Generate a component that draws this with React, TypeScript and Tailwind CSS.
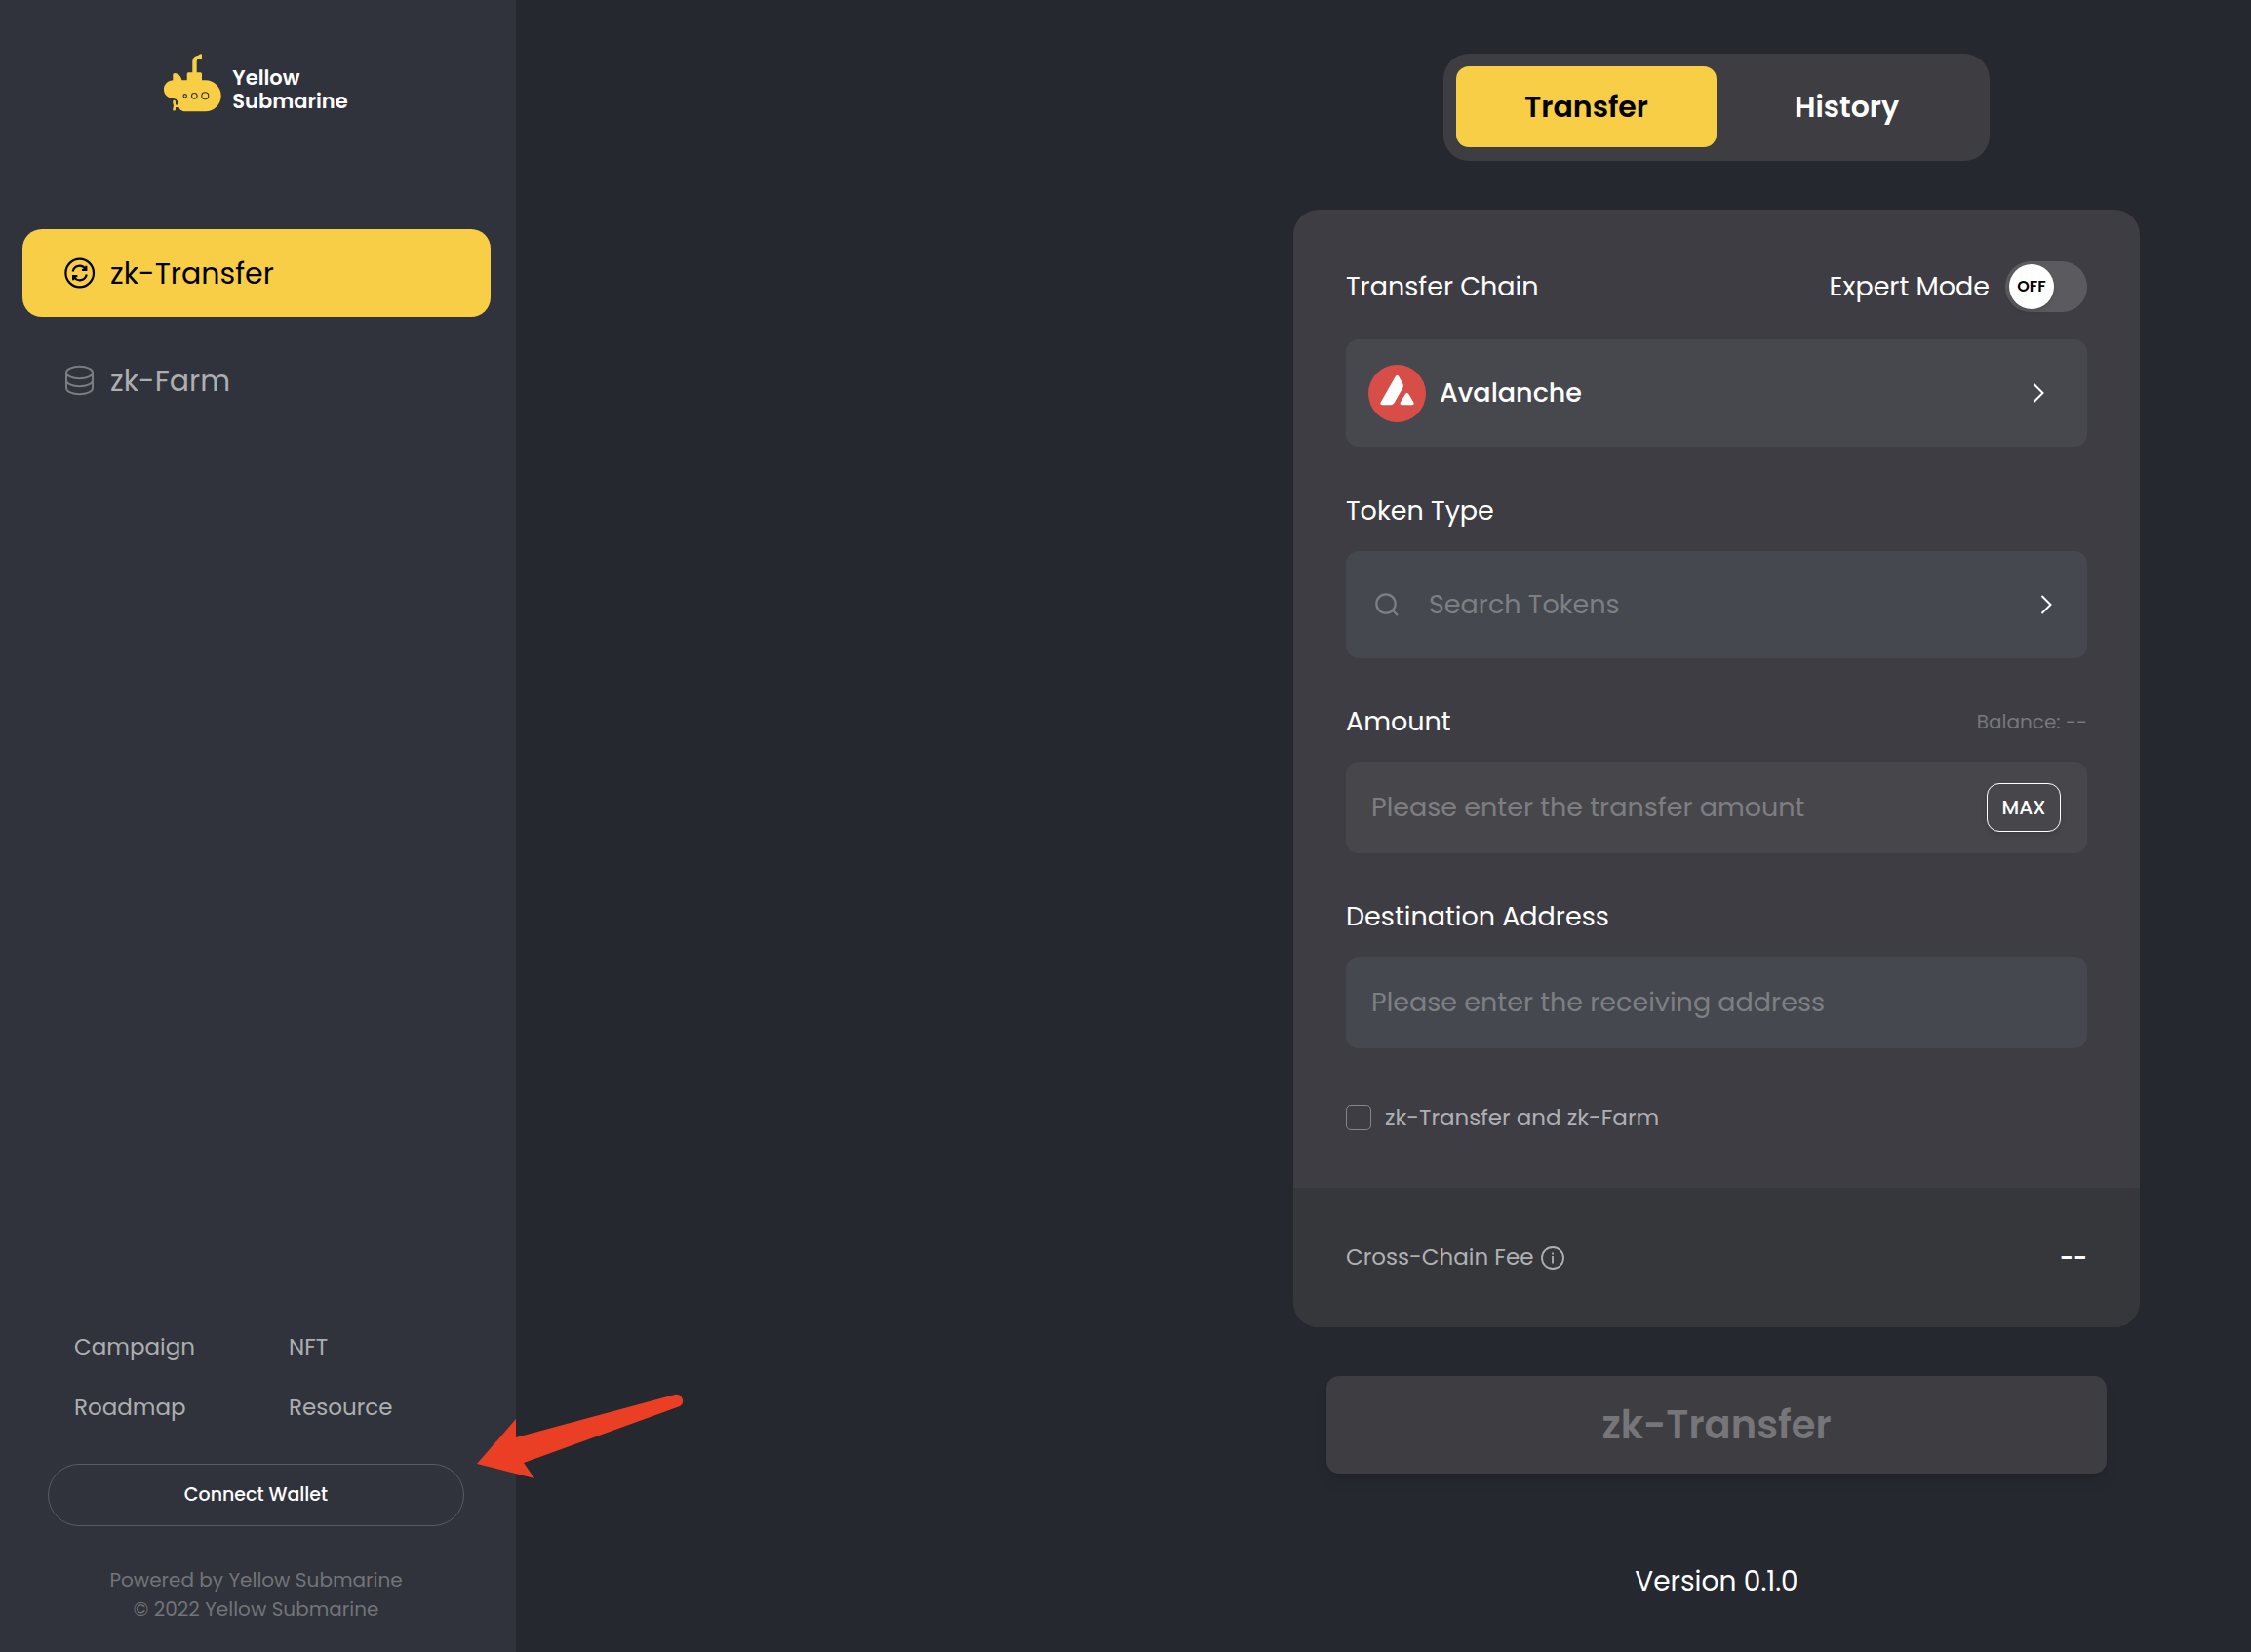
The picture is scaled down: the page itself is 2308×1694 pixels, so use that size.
import { useState } from "react";
import type { ReactNode } from "react";

function SubmarineLogo() {
  return (
    <svg viewBox="0 0 60 61" className="h-[61px] w-[60px]" aria-hidden="true">
      <g fill="#f8ce46">
        <path d="M9.300 27.300V21.500q0-1.500 1.500-1.500c4 0 6.500 3 7.700 7.300H23.700v-6.500q0-1.500 1.500-1.500H29.300V9c0-4.500 2.500-7 6-7.300L37 .6q2-1 2 .6v4q0 1.600-2 .6l-1-.5c-1.600.1-2.300 1.200-2.300 3.200v10.800H37.500q1.500 0 1.500 1.500v6.500h3.700a16 16 0 0 1 0 32H22.500c-5 0-7.500-2.700-7.500-6.500 0-4-2-6.800-5.700-6.800a9.350 9.350 0 0 1 0-18.700z" />
        <path d="M10.500 47.800c1.500 0 1.500 1.400 1.500 4.700h4v2.400h-4c0 2.600 0 3.700-1.500 3.700s-1.500-1.200-1-3.200c.6-1.500.6-2.500 0-4s-.5-3.600 1-3.600z" />
      </g>
      <g fill="none" stroke="#30333b" strokeWidth="1.100">
        <circle cx="21.700" cy="43.300" r="1.700" />
        <circle cx="31.300" cy="43.300" r="2.800" />
        <circle cx="42.300" cy="43.300" r="3.500" />
      </g>
    </svg>
  );
}

function TransferIcon() {
  return (
    <svg viewBox="0 0 32 32" className="size-8" fill="none" stroke="currentColor" aria-hidden="true">
      <circle cx="15.700" cy="16" r="14.300" strokeWidth="2.200" />
      <g strokeWidth="2.200">
        <path d="M8.700 14.500A7 7 0 0 1 21.500 12M22.700 17.500A7 7 0 0 1 9.900 20" />
        <path d="M22.300 8.800V12.800H18M9.100 23.200V19.200H13.400" />
      </g>
    </svg>
  );
}

function FarmIcon() {
  return (
    <svg viewBox="0 0 32 32" className="size-8" fill="none" stroke="currentColor" strokeWidth="2" aria-hidden="true">
      <ellipse cx="15.500" cy="8" rx="13.500" ry="6.200" />
      <path d="M2 8v16c0 3.500 6 6.300 13.500 6.300s13.500-2.800 13.500-6.300V8" />
      <path d="M2 16c0 3.500 6 6.300 13.500 6.300s13.500-2.800 13.500-6.300" />
    </svg>
  );
}

function AvalancheIcon() {
  return (
    <svg viewBox="0 0 59 59" className="size-[59px]" aria-hidden="true">
      <circle cx="29.500" cy="29.500" r="29.500" fill="#d74e49" />
      <path fill="#fff" d="M27.800 12c.9-1.500 2.500-1.500 3.400 0l4 7.200c.9 1.600.9 3.200 0 4.800l-8.500 14.800c-1 1.700-2 2.400-3.800 2.400h-8.500c-1.800 0-2.600-1.200-1.700-2.800zM38 30c.9-1.500 2.400-1.500 3.300 0l5 8.400c.9 1.600 0 2.800-1.700 2.800h-10c-1.800 0-2.600-1.200-1.700-2.800z" />
    </svg>
  );
}

function Chevron() {
  return (
    <svg viewBox="0 0 12 20" className="h-5 w-3" fill="none" stroke="#fff" strokeWidth="2" aria-hidden="true">
      <path d="M1.500 1l9 9-9 9" />
    </svg>
  );
}

function SearchIcon() {
  return (
    <svg viewBox="0 0 24 24" className="size-6" fill="none" stroke="currentColor" strokeWidth="2.200" aria-hidden="true">
      <circle cx="11" cy="11" r="9.700" />
      <path d="M17.500 17.500l5.500 5.500" />
    </svg>
  );
}

function InfoIcon() {
  return (
    <svg viewBox="0 0 24 24" className="size-6" fill="none" stroke="currentColor" strokeWidth="1.800" aria-hidden="true">
      <circle cx="12" cy="12" r="11" />
      <path d="M12 10v7.500M12 6.500v2" />
    </svg>
  );
}

function PointerArrow() {
  return (
    <svg
      viewBox="0 0 212 88"
      className="pointer-events-none absolute bottom-[178px] left-[489px] z-10 h-[88px] w-[212px]"
      fill="#ea3f25"
      aria-hidden="true"
    >
      <path d="M0 73L40 27V46L203 2c5-1 9 4 8 8q0 2-3 4L48 72l11 16z" />
    </svg>
  );
}

function FieldLabel({ htmlFor, children }: { htmlFor: string; children: ReactNode }) {
  return (
    <label htmlFor={htmlFor} className="text-[27px] leading-[42px] text-white">
      {children}
    </label>
  );
}

const links = ["Campaign", "NFT", "Roadmap", "Resource"];

function Sidebar() {
  return (
    <aside className="flex w-[529px] shrink-0 flex-col bg-[#30333b]">
      <a href="#home" className="mt-[55px] mr-1 flex items-start gap-[10px] self-center text-white">
        <SubmarineLogo />
        <span className="flex flex-col pt-[13px] text-[21px] leading-6 font-semibold">
          <span>Yellow</span>
          <span>Submarine</span>
        </span>
      </a>
      <nav className="mt-[119px] mr-[26px] ml-[23px] flex flex-col gap-5 text-[30px]">
        <a href="#transfer" className="flex h-[90px] items-center gap-[15px] rounded-[20px] bg-[#f8ce46] px-[43px] text-black">
          <TransferIcon />
          zk-Transfer
        </a>
        <a href="#farm" className="flex h-[90px] items-center gap-[15px] px-[43px] text-[#acaeb1]">
          <span className="text-[#7b7d82]">
            <FarmIcon />
          </span>
          zk-Farm
        </a>
      </nav>
      <div className="mt-auto">
        <div className="ml-[76px] grid grid-cols-[220px_1fr] gap-y-[26px] text-[23px] leading-9 text-[#acaeb1]">
          {links.map((name) => (
            <a key={name} href={"#" + name.toLowerCase()}>
              {name}
            </a>
          ))}
        </div>
        <div className="mt-10 mr-[53px] ml-[49px]">
          <button className="h-16 w-full rounded-full border border-[#5a5c62] text-[19px] font-medium text-white">
            Connect Wallet
          </button>
          <p className="mt-10 mb-[29px] text-center text-[20px] leading-[30px] text-[#727479]">
            Powered by Yellow Submarine
            <br />© 2022 Yellow Submarine
          </p>
        </div>
      </div>
    </aside>
  );
}

function TransferCard() {
  const [expert, setExpert] = useState(false);
  return (
    <form className="mt-[50px] w-[868px] overflow-hidden rounded-[26px] bg-[#3d3d43]" onSubmit={(e) => e.preventDefault()}>
      <div className="flex flex-col px-[54px] pt-[53px] pb-[58px]">
        <div className="flex h-[52px] items-center justify-between">
          <FieldLabel htmlFor="chain">Transfer Chain</FieldLabel>
          <div className="flex items-center gap-4">
            <FieldLabel htmlFor="expert">Expert Mode</FieldLabel>
            <button
              id="expert"
              type="button"
              role="switch"
              aria-checked={expert}
              onClick={() => setExpert(!expert)}
              className="flex h-[52px] w-[84px] items-center rounded-full bg-[#5a5a5f] px-1"
            >
              <span className="flex size-[46px] items-center justify-center rounded-full bg-white text-[16px] font-semibold text-black shadow-md">
                OFF
              </span>
            </button>
          </div>
        </div>
        <button
          id="chain"
          type="button"
          className="mt-7 mb-px flex h-[110px] items-center rounded-[13px] bg-[#46484e] pr-11 pl-[23px] text-[27px] font-medium text-white"
        >
          <AvalancheIcon />
          <span className="mr-auto ml-[14px]">Avalanche</span>
          <Chevron />
        </button>

        <div className="mt-11 mb-5 flex">
          <FieldLabel htmlFor="token">Token Type</FieldLabel>
        </div>
        <div className="flex h-[110px] items-center rounded-[13px] bg-[#45484f] pr-9 pl-[30px] text-[#7d7f83]">
          <SearchIcon />
          <input
            id="token"
            placeholder="Search Tokens"
            className="ml-[31px] h-full min-w-0 flex-1 bg-transparent text-[27px] outline-none placeholder:text-[#7d7f83]"
          />
          <Chevron />
        </div>

        <div className="mt-11 mb-5 flex items-center justify-between">
          <FieldLabel htmlFor="amount">Amount</FieldLabel>
          <span className="text-[20px] text-[#77777c]">Balance: --</span>
        </div>
        <div className="flex h-[94px] items-center rounded-[13px] bg-[#47474b] pr-[27px] pl-[26px]">
          <input
            id="amount"
            placeholder="Please enter the transfer amount"
            className="h-full min-w-0 flex-1 bg-transparent text-[27px] outline-none placeholder:text-[#7e7e82]"
          />
          <button type="button" className="h-[50px] w-[76px] rounded-[13px] border border-white text-[20px] font-medium text-white shadow-md">
            MAX
          </button>
        </div>

        <div className="mt-11 mb-5 flex">
          <FieldLabel htmlFor="address">Destination Address</FieldLabel>
        </div>
        <input
          id="address"
          placeholder="Please enter the receiving address"
          className="h-[94px] rounded-[13px] bg-[#45484f] px-[26px] text-[27px] outline-none placeholder:text-[#7d7f83]"
        />

        <label className="mt-[57px] flex h-7 items-center gap-[14px] text-[23px] text-[#b0b0b4]">
          <input type="checkbox" className="size-[26px] appearance-none rounded-[5px] border border-[#85858a]" />
          zk-Transfer and zk-Farm
        </label>
      </div>
      <div className="flex h-[143px] items-center justify-between bg-[#36373b] px-[54px]">
        <span className="flex items-center gap-2 text-[23px] text-[#b0b0b4]">
          Cross-Chain Fee
          <InfoIcon />
        </span>
        <span className="text-[24px] font-semibold text-white">--</span>
      </div>
    </form>
  );
}

export default function App() {
  return (
    <div className="relative flex min-h-screen bg-[#262830] font-['Poppins','Inter',sans-serif]">
      <Sidebar />
      <PointerArrow />
      <main className="flex flex-1 justify-end">
        <section className="flex w-[1096px] flex-col items-center pt-[55px]">
          <div role="tablist" className="flex w-[560px] rounded-[26px] bg-[#3d3d42] px-[13px] pt-[13px] pb-[14px] text-[30px] font-semibold">
            <button role="tab" aria-selected="true" className="h-[83px] flex-1 rounded-[13px] bg-[#f8ce46] text-black">
              Transfer
            </button>
            <button role="tab" aria-selected="false" className="h-[83px] flex-1 text-white">
              History
            </button>
          </div>
          <TransferCard />
          <button disabled className="mt-[50px] h-[100px] w-[800px] rounded-[13px] bg-[#3d3d42] text-[40px] font-semibold text-[#75757a] shadow-lg">
            zk-Transfer
          </button>
          <p className="mt-[90px] text-[28px] leading-[42px] text-white">Version 0.1.0</p>
        </section>
      </main>
    </div>
  );
}
